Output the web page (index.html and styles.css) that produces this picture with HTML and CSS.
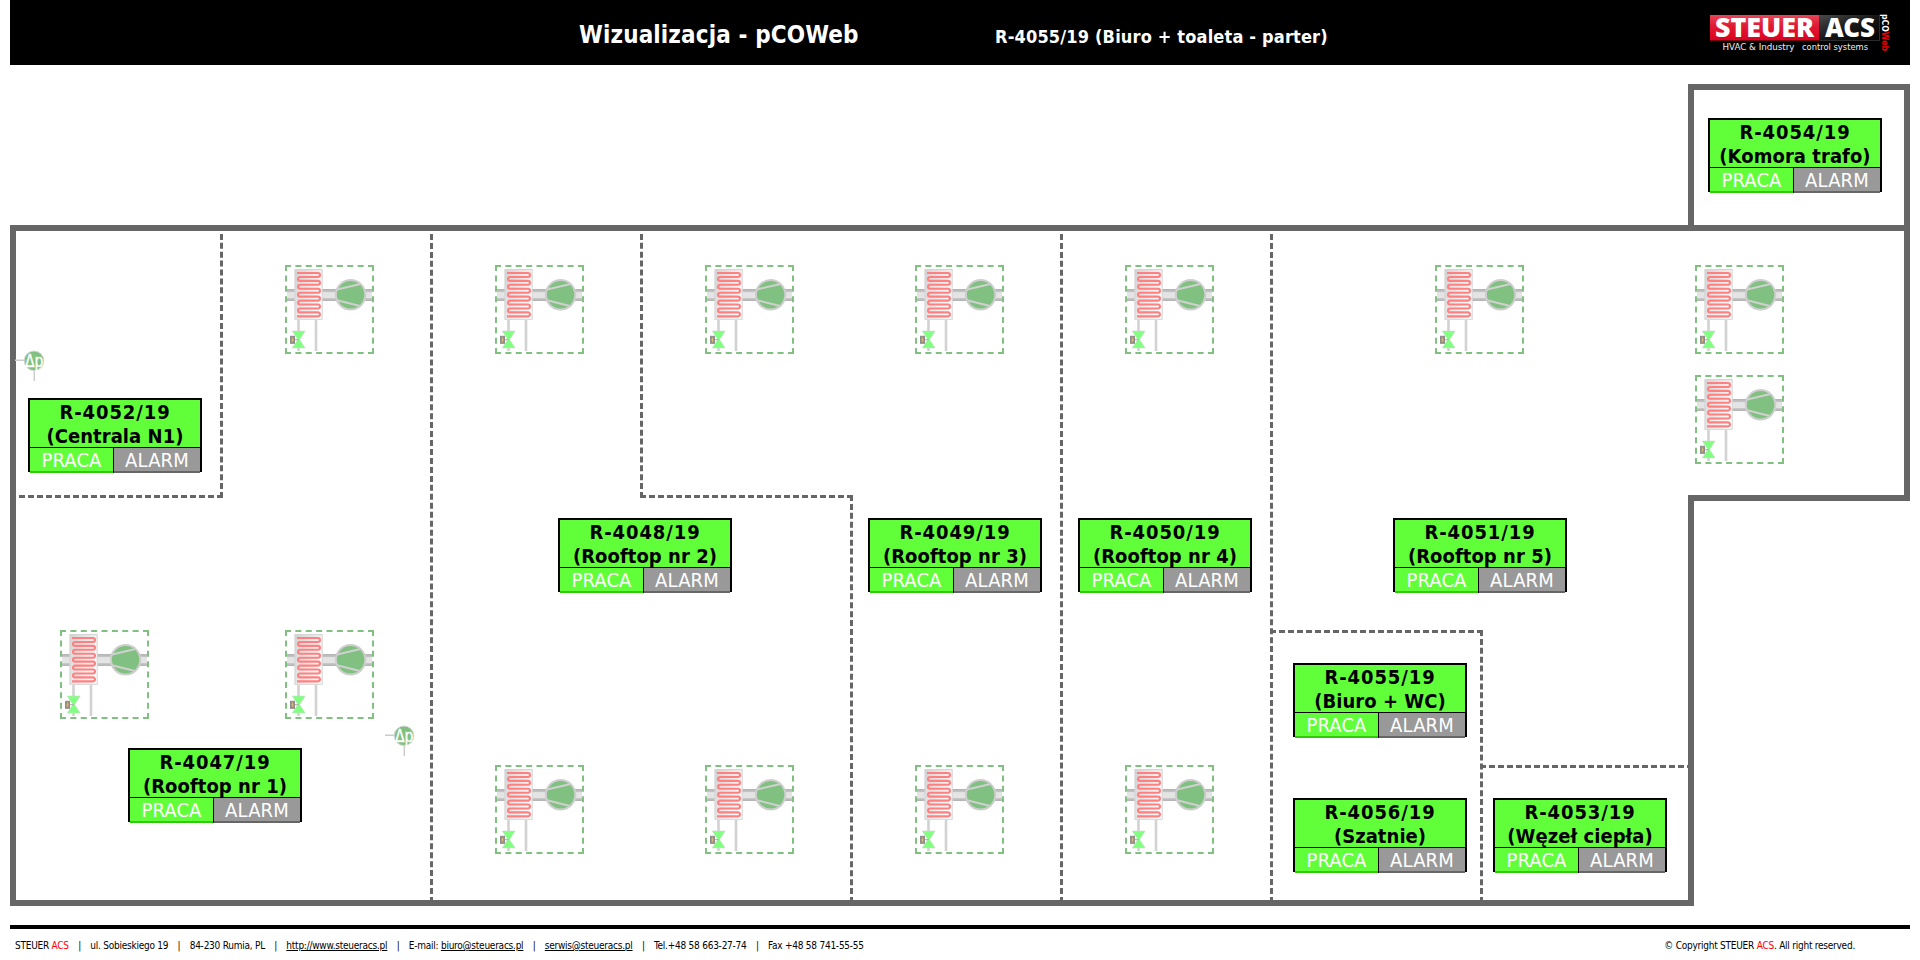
FILE: index.html
```html
<!DOCTYPE html>
<html lang="pl">
<head>
<meta charset="utf-8">
<title>Wizualizacja - pCOWeb</title>
<link rel="stylesheet" href="styles.css">
</head>
<body>
<svg class="defs" width="0" height="0">
  <defs>
    <linearGradient id="duct" x1="0" y1="0" x2="0" y2="1">
      <stop offset="0" stop-color="#b2b2b2"/><stop offset=".22" stop-color="#c4c4c4"/><stop offset=".3" stop-color="#e4e4e4"/>
      <stop offset=".72" stop-color="#e4e4e4"/><stop offset=".8" stop-color="#c4c4c4"/><stop offset="1" stop-color="#b2b2b2"/>
    </linearGradient>
    <linearGradient id="case" x1="0" y1="0" x2="1" y2=".6">
      <stop offset="0" stop-color="#d2d2d2"/><stop offset="1" stop-color="#fcfcfc"/>
    </linearGradient>
    <symbol id="unit" viewBox="2 2 85 85">
      <rect x="2" y="24" width="85" height="12" fill="url(#duct)"/>
      <rect x="9.9" y="4.5" width="27.3" height="49.8" fill="url(#case)" stroke="#d4d4d4"/>
      <path d="M12 8H33a1.97 1.97 0 0 1 0 3.94H15a1.97 1.97 0 0 0 0 3.94H33a1.97 1.97 0 0 1 0 3.94H15a1.97 1.97 0 0 0 0 3.94H33a1.97 1.97 0 0 1 0 3.94H15a1.97 1.97 0 0 0 0 3.94H33a1.97 1.97 0 0 1 0 3.94H15a1.97 1.97 0 0 0 0 3.94H33a1.97 1.97 0 0 1 0 3.94H15a1.97 1.97 0 0 0 0 3.94H33a1.97 1.97 0 0 1 0 3.94H12" fill="none" stroke="#ff8080" stroke-width="2.1"/>
      <path d="M13.5 55V86M31 55V86" stroke="#d2d2d2" stroke-width="2.6"/>
      <path d="M7.2 66H20.2L14.6 74.6L20.2 83H7.2L12.8 74.6Z" fill="#80ff80" stroke="#cfdccf" stroke-width=".6"/>
      <path d="M10 74.7H13.7" stroke="#aaa"/>
      <rect x="5.5" y="71.3" width="4" height="7" fill="#a08f78" stroke="#8c8c8c"/>
      <path d="M7.5 72.5v4.5M6.3 74.8h2.4" stroke="#e0bb78" stroke-width=".8"/>
      <circle cx="65.6" cy="29.8" r="14.7" fill="#80c080"/>
      <path d="M51 24.7L75.5 19M51 35L75 41" stroke="#d0d0d0" stroke-width="2"/>
      <circle cx="65.6" cy="29.8" r="14.7" fill="none" stroke="#cecece" stroke-width="2"/>
    </symbol>
    <symbol id="dp" viewBox="0 0 30 34">
      <path d="M0 10.3H9M19.3 20V31" stroke="#ccc" stroke-width="1.5"/>
      <circle cx="19" cy="10.8" r="9.8" fill="#80c080" stroke="#d6d6d6"/>
      <text x="10" y="17" class="dp-text" textLength="18.5" lengthAdjust="spacingAndGlyphs">Δp</text>
    </symbol>
  </defs>
</svg>

<header class="header">
  <h1 class="title">Wizualizacja - pCOWeb</h1>
  <h2 class="subtitle">R-4055/19 (Biuro + toaleta - parter)</h2>
  <svg class="logo" width="190" height="45" viewBox="0 0 190 45">
    <defs>
      <linearGradient id="red" x1="0" y1="0" x2="0" y2="1">
        <stop offset="0" stop-color="#e8455a"/><stop offset=".4" stop-color="#df1c36"/><stop offset="1" stop-color="#dc0020"/>
      </linearGradient>
      <linearGradient id="dark" x1="0" y1="0" x2="1" y2="1">
        <stop offset="0" stop-color="#4a4a4a"/><stop offset=".5" stop-color="#161616"/><stop offset="1" stop-color="#000"/>
      </linearGradient>
    </defs>
    <rect x="0" y="3" width="109.5" height="25.5" fill="url(#red)"/>
    <rect x="109.5" y="3" width="60" height="25.5" fill="url(#dark)"/>
    <path d="M169.5 3.5V28.5H110" fill="none" stroke="#2c2c2c"/>
    <text class="logo-name" x="5" y="25.3" textLength="99" lengthAdjust="spacingAndGlyphs">STEUER</text>
    <text class="logo-name" x="115" y="25.3" textLength="50" lengthAdjust="spacingAndGlyphs">ACS</text>
    <text class="logo-tag" x="12.5" y="37.5" textLength="72" lengthAdjust="spacingAndGlyphs">HVAC &amp; Industry</text>
    <text class="logo-tag" x="92" y="37.5" textLength="66" lengthAdjust="spacingAndGlyphs">control systems</text>
    <text class="logo-web" transform="translate(172 2) rotate(90)" textLength="37" lengthAdjust="spacingAndGlyphs">pCO<tspan fill="#f00000">Web</tspan></text>
  </svg>
</header>

<main class="plan">
  <div class="room" style="left:0;top:141px;width:213px;height:273px;border-width:0 3px 3px 0"></div>
  <div class="room" style="left:420px;top:141px;width:3px;height:678px;border-left-width:3px"></div>
  <div class="room" style="left:630px;top:141px;width:213px;height:273px;border-width:0 0 3px 3px"></div>
  <div class="room" style="left:840px;top:411px;width:3px;height:408px;border-left-width:3px"></div>
  <div class="room" style="left:1050px;top:141px;width:3px;height:678px;border-left-width:3px"></div>
  <div class="room" style="left:1260px;top:141px;width:3px;height:678px;border-left-width:3px"></div>
  <div class="room" style="left:1260px;top:546px;width:213px;height:273px;border-width:3px 3px 0 0"></div>
  <div class="room" style="left:1470px;top:681px;width:213px;height:3px;border-top-width:3px"></div>
  <svg class="walls" width="1900" height="822" viewBox="0 0 1900 822">
    <path d="M3 144H1897V414H1681V819H3ZM1681 144V3H1897V144" fill="none" stroke="#666" stroke-width="6" stroke-linejoin="miter"/>
  </svg>

  <svg class="unit" style="left:275px;top:181px"><use href="#unit"/></svg>
  <svg class="unit" style="left:485px;top:181px"><use href="#unit"/></svg>
  <svg class="unit" style="left:695px;top:181px"><use href="#unit"/></svg>
  <svg class="unit" style="left:905px;top:181px"><use href="#unit"/></svg>
  <svg class="unit" style="left:1115px;top:181px"><use href="#unit"/></svg>
  <svg class="unit" style="left:1425px;top:181px"><use href="#unit"/></svg>
  <svg class="unit" style="left:1685px;top:181px"><use href="#unit"/></svg>
  <svg class="unit" style="left:1685px;top:291px"><use href="#unit"/></svg>
  <svg class="unit" style="left:50px;top:546px"><use href="#unit"/></svg>
  <svg class="unit" style="left:275px;top:546px"><use href="#unit"/></svg>
  <svg class="unit" style="left:485px;top:681px"><use href="#unit"/></svg>
  <svg class="unit" style="left:695px;top:681px"><use href="#unit"/></svg>
  <svg class="unit" style="left:905px;top:681px"><use href="#unit"/></svg>
  <svg class="unit" style="left:1115px;top:681px"><use href="#unit"/></svg>

  <svg class="dp" style="left:5px;top:266px"><use href="#dp"/></svg>
  <svg class="dp" style="left:375px;top:641px"><use href="#dp"/></svg>

  <div class="tile" style="left:1698px;top:34px"><div class="name"><b class="code">R-4054/19</b><b>(Komora trafo)</b></div><div class="state"><span class="run">PRACA</span><span class="alarm">ALARM</span></div></div>
  <div class="tile" style="left:18px;top:314px"><div class="name"><b class="code">R-4052/19</b><b>(Centrala N1)</b></div><div class="state"><span class="run">PRACA</span><span class="alarm">ALARM</span></div></div>
  <div class="tile" style="left:118px;top:664px"><div class="name"><b class="code">R-4047/19</b><b>(Rooftop nr 1)</b></div><div class="state"><span class="run">PRACA</span><span class="alarm">ALARM</span></div></div>
  <div class="tile" style="left:548px;top:434px"><div class="name"><b class="code">R-4048/19</b><b>(Rooftop nr 2)</b></div><div class="state"><span class="run">PRACA</span><span class="alarm">ALARM</span></div></div>
  <div class="tile" style="left:858px;top:434px"><div class="name"><b class="code">R-4049/19</b><b>(Rooftop nr 3)</b></div><div class="state"><span class="run">PRACA</span><span class="alarm">ALARM</span></div></div>
  <div class="tile" style="left:1068px;top:434px"><div class="name"><b class="code">R-4050/19</b><b>(Rooftop nr 4)</b></div><div class="state"><span class="run">PRACA</span><span class="alarm">ALARM</span></div></div>
  <div class="tile" style="left:1383px;top:434px"><div class="name"><b class="code">R-4051/19</b><b>(Rooftop nr 5)</b></div><div class="state"><span class="run">PRACA</span><span class="alarm">ALARM</span></div></div>
  <div class="tile" style="left:1283px;top:579px"><div class="name"><b class="code">R-4055/19</b><b>(Biuro + WC)</b></div><div class="state"><span class="run">PRACA</span><span class="alarm">ALARM</span></div></div>
  <div class="tile" style="left:1283px;top:714px"><div class="name"><b class="code">R-4056/19</b><b>(Szatnie)</b></div><div class="state"><span class="run">PRACA</span><span class="alarm">ALARM</span></div></div>
  <div class="tile" style="left:1483px;top:714px"><div class="name"><b class="code">R-4053/19</b><b>(Węzeł ciepła)</b></div><div class="state"><span class="run">PRACA</span><span class="alarm">ALARM</span></div></div>
</main>

<footer class="footer">
  <ul class="contact">
    <li>STEUER <b class="brand">ACS</b></li>
    <li>ul. Sobieskiego 19</li>
    <li>84-230 Rumia, PL</li>
    <li><a class="link" href="#">http://www.steueracs.pl</a></li>
    <li>E-mail: <a class="link" href="#">biuro@steueracs.pl</a></li>
    <li><a class="link" href="#">serwis@steueracs.pl</a></li>
    <li>Tel.+48 58 663-27-74</li>
    <li>Fax +48 58 741-55-55</li>
  </ul>
  <p class="copyright">© Copyright STEUER <b class="brand">ACS</b>. All right reserved.</p>
</footer>
</body>
</html>
```
FILE: styles.css
```css
* { box-sizing: border-box; }

body {
  margin: 0;
  padding: 0 10px;
  height: 960px;
  overflow: hidden;
  background: #fff;
  font-family: "DejaVu Sans Condensed", "DejaVu Sans", sans-serif;
  font-stretch: condensed;
}

.defs { position: absolute; }

.header {
  display: grid;
  grid-template-columns: 569px 416px 715px auto;
  height: 65px;
  background: #000;
  color: #fff;
}

.title, .subtitle { margin: 0; font-weight: bold; white-space: nowrap; }
.title { grid-column: 2; font-size: 24px; line-height: 28px; padding-top: 21px; letter-spacing: .12px; }
.subtitle { font-size: 18px; line-height: 22px; padding-top: 26px; letter-spacing: .17px; }

.logo { margin-top: 12px; overflow: visible; }
.logo-name { font: 900 26.5px "Noto Sans", sans-serif; fill: #fff; }
.logo-tag { font: 8.5px "DejaVu Sans", sans-serif; fill: #eee; }
.logo-web { font: bold 9.5px "DejaVu Sans", sans-serif; fill: #fff; }

.plan { position: relative; height: 822px; margin-top: 19px; }
.room, .walls, .unit, .dp, .tile { position: absolute; }
.walls { left: 0; top: 0; }
.room { border: 0 dashed #666; }
.unit { width: 89px; height: 89px; border: 2px dashed #80c080; }
.dp { width: 30px; height: 34px; }
.dp-text { font: 17px "DejaVu Sans", sans-serif; fill: #fff; stroke: #fff; stroke-width: .4px; }

.tile {
  width: 174px;
  height: 74px;
  border: 2px solid #000;
  border-bottom: 0;
  font-size: 20px;
  text-align: center;
}

.name {
  height: 48px;
  overflow: hidden;
  border-bottom: 1px solid #000;
  background: #60ff3a;
  line-height: 25px;
  white-space: nowrap;
}
.name b { display: block; letter-spacing: .05px; }
.name .code { letter-spacing: .9px; line-height: 24px; }

.state { display: grid; grid-template-columns: 84px 86px; height: 24px; color: #fff; line-height: 25px; letter-spacing: .15px; }
.run { border-right: 1px solid #000; background: #60ff3a; box-shadow: inset 0 -2px #30cc0c; }
.alarm { background: #999; box-shadow: inset 0 -2px #666; }

.footer {
  display: flex;
  justify-content: space-between;
  margin-top: 19px;
  padding: 10px 55px 0 5px;
  border-top: 4px solid #000;
  font-size: 10px;
  line-height: 14px;
  letter-spacing: -.24px;
}

.contact { display: flex; margin: 0; padding: 0; list-style: none; }
.contact li + li::before { content: "|"; margin: 0 9.3px; }
.brand { color: #f00; font-weight: normal; }
.link { color: #000; }
.copyright { margin: 0; }
```
